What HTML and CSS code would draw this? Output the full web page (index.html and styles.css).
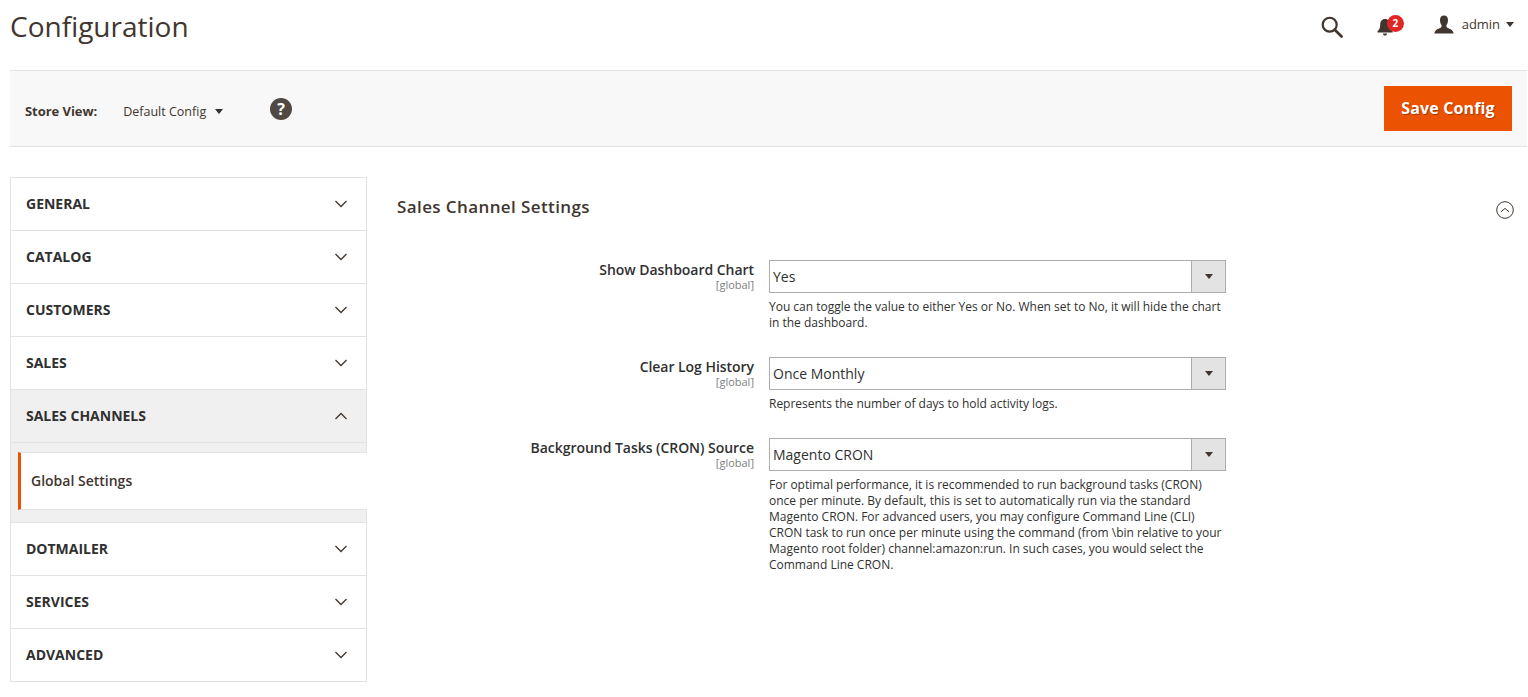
FILE: index.html
```html
<!DOCTYPE html>
<html lang="en">

<head>
    <meta charset="UTF-8">
    <title>Configuration</title>
    <link rel="stylesheet" href="styles.css">
</head>

<body>
    <!-- Page header -->
    <header class="page-header">
        <h1 class="page-title">Configuration</h1>
        <div class="header-actions">
            <svg class="icon-search" width="22" height="22" viewBox="0 0 24 24">
                <circle cx="9.5" cy="9.5" r="7.6" fill="none" stroke="#41362f" stroke-width="2.4" />
                <path d="M15 15L22.4 22.4" stroke="#41362f" stroke-width="3" stroke-linecap="round" />
            </svg>
            <div class="notifications">
                <svg width="18" height="20" viewBox="0 0 18 20">
                    <path d="M9 2C5.8 2 4.2 4.5 4.2 7.5C4.2 11 3.4 12.6 1.4 14.4V15.6H16.6V14.4C14.6 12.6 13.8 11 13.8 7.5C13.8 4.5 12.2 2 9 2Z" fill="#41362f" />
                    <path d="M7 16.6H11C11 18 10.2 18.6 9 18.6C7.8 18.6 7 18 7 16.6Z" fill="#41362f" />
                </svg>
                <span class="badge">2</span>
            </div>
            <div class="user">
                <svg class="user-icon" width="20" height="20" viewBox="0 0 20 20">
                    <path d="M10 0.5C7.2 0.5 6 2.6 6 5C6 7.2 6.6 9 7.6 10.2C7.8 11.6 7.2 12.4 5.6 13.2C3.6 14.1 1 14.6 0.4 18.6H19.6C19 14.6 16.4 14.1 14.4 13.2C12.8 12.4 12.2 11.6 12.4 10.2C13.4 9 14 7.2 14 5C14 2.6 12.8 0.5 10 0.5Z" fill="#41362f" />
                </svg>
                <span class="user-name">admin</span>
                <span class="caret caret-small"></span>
            </div>
        </div>
    </header>

    <!-- Store view bar -->
    <div class="action-bar">
        <div class="store-switcher">
            <span class="store-label">Store View:</span>
            <span class="store-value">Default Config</span>
            <span class="caret store-caret"></span>
            <span class="help-icon">?</span>
        </div>
        <button class="save-button">Save Config</button>
    </div>

    <div class="page-columns">
        <!-- Left nav -->
        <nav class="side-nav">
            <div class="nav-item">GENERAL<svg class="chevron" width="14" height="8" viewBox="0 0 14 8"><path d="M1.5 1L7 6.5L12.5 1" /></svg></div>
            <div class="nav-item">CATALOG<svg class="chevron" width="14" height="8" viewBox="0 0 14 8"><path d="M1.5 1L7 6.5L12.5 1" /></svg></div>
            <div class="nav-item">CUSTOMERS<svg class="chevron" width="14" height="8" viewBox="0 0 14 8"><path d="M1.5 1L7 6.5L12.5 1" /></svg></div>
            <div class="nav-item">SALES<svg class="chevron" width="14" height="8" viewBox="0 0 14 8"><path d="M1.5 1L7 6.5L12.5 1" /></svg></div>
            <div class="nav-item nav-item-open">SALES CHANNELS<svg class="chevron" width="14" height="8" viewBox="0 0 14 8"><path d="M1.5 7L7 1.5L12.5 7" /></svg></div>
            <div class="nav-sub">
                <a class="nav-sub-link">Global Settings</a>
            </div>
            <div class="nav-item">DOTMAILER<svg class="chevron" width="14" height="8" viewBox="0 0 14 8"><path d="M1.5 1L7 6.5L12.5 1" /></svg></div>
            <div class="nav-item">SERVICES<svg class="chevron" width="14" height="8" viewBox="0 0 14 8"><path d="M1.5 1L7 6.5L12.5 1" /></svg></div>
            <div class="nav-item">ADVANCED<svg class="chevron" width="14" height="8" viewBox="0 0 14 8"><path d="M1.5 1L7 6.5L12.5 1" /></svg></div>
        </nav>

        <!-- Settings -->
        <main class="settings">
            <div class="section-head">
                <h2 class="section-title">Sales Channel Settings</h2>
                <svg class="section-toggle" width="18" height="18" viewBox="0 0 18 18">
                    <circle cx="9" cy="9" r="8.3" fill="none" stroke="#41362f" stroke-width="1" />
                    <path d="M5 10.8L9 7.4L13 10.8" fill="none" stroke="#41362f" stroke-width="1" />
                </svg>
            </div>

            <div class="field">
                <div class="field-label">
                    <label>Show Dashboard Chart</label>
                    <span class="scope">[global]</span>
                </div>
                <div class="field-control">
                    <div class="select-box">
                        <span class="select-value">Yes</span>
                        <span class="select-arrow"><span class="caret caret-small"></span></span>
                    </div>
                    <p class="note">You can toggle the value to either Yes or No. When set to No, it will hide the chart in the dashboard.</p>
                </div>
            </div>

            <div class="field">
                <div class="field-label">
                    <label>Clear Log History</label>
                    <span class="scope">[global]</span>
                </div>
                <div class="field-control">
                    <div class="select-box">
                        <span class="select-value">Once Monthly</span>
                        <span class="select-arrow"><span class="caret caret-small"></span></span>
                    </div>
                    <p class="note">Represents the number of days to hold activity logs.</p>
                </div>
            </div>

            <div class="field">
                <div class="field-label">
                    <label>Background Tasks (CRON) Source</label>
                    <span class="scope">[global]</span>
                </div>
                <div class="field-control">
                    <div class="select-box">
                        <span class="select-value">Magento CRON</span>
                        <span class="select-arrow"><span class="caret caret-small"></span></span>
                    </div>
                    <p class="note">For optimal performance, it is recommended to run background tasks (CRON) once per minute. By default, this is set to automatically run via the standard Magento CRON. For advanced users, you may configure Command Line (CLI) CRON task to run once per minute using the command (from \bin relative to your Magento root folder) channel:amazon:run. In such cases, you would select the Command Line CRON.</p>
                </div>
            </div>
        </main>
    </div>
</body>

</html>
```

FILE: styles.css
```css
body {
    margin: 0;
    padding-left: 10px;
    height: 697px;
    overflow: hidden;
    background-color: #ffffff;
    color: #303030;
    font-family: 'Open Sans', sans-serif;
    font-size: 14px;
}

/* Page header */
.page-header {
    display: flex;
    justify-content: space-between;
    align-items: flex-start;
    height: 70px;
}

.page-title {
    margin: 7px 0 0;
    font-size: 28px;
    font-weight: 400;
    line-height: 38px;
    color: #41362f;
}

.header-actions {
    display: flex;
    align-items: center;
    height: 48px;
    padding-right: 14px;
}

.icon-search {
    margin-top: 6px;
}

.notifications {
    position: relative;
    display: flex;
    margin-left: 33px;
    margin-top: 6px;
}

.badge {
    position: absolute;
    top: -2px;
    left: 11px;
    width: 17px;
    height: 17px;
    border-radius: 50%;
    background-color: #e22626;
    color: #ffffff;
    font-size: 10px;
    font-weight: 700;
    line-height: 17px;
    text-align: center;
}

.user {
    display: flex;
    align-items: center;
    margin-left: 40px;
}

.user-icon {
    margin-top: 2px;
}

.user-name {
    margin-left: 8px;
    margin-right: 6px;
    font-size: 13px;
    letter-spacing: -0.05px;
    color: #41362f;
}

.caret {
    display: inline-block;
    width: 0;
    height: 0;
    border-left: 4.5px solid transparent;
    border-right: 4.5px solid transparent;
    border-top: 5px solid #303030;
}

.caret-small {
    border-top-color: #41362f;
}

/* Store view bar */
.action-bar {
    display: flex;
    justify-content: space-between;
    align-items: center;
    height: 75px;
    margin-right: 1px;
    padding: 0 15px;
    background-color: #f8f8f8;
    border-top: 1px solid #e3e3e3;
    border-bottom: 1px solid #e3e3e3;
}

.store-switcher {
    display: flex;
    align-items: center;
    margin-top: 4px;
    font-size: 13px;
}

.store-label {
    font-weight: 700;
    color: #41362f;
    letter-spacing: -0.05px;
}

.store-value {
    margin-left: 26px;
    margin-right: 9px;
    padding-top: 1px;
    font-size: 12.5px;
    color: #41362f;
}

.store-caret {
    margin-top: 2px;
}

.help-icon {
    display: block;
    width: 22px;
    height: 22px;
    margin-left: 47px;
    margin-top: -4px;
    border-radius: 50%;
    background-color: #514943;
    color: #ffffff;
    font-size: 16px;
    font-weight: 700;
    line-height: 22px;
    text-align: center;
}

.save-button {
    width: 128px;
    height: 45px;
    padding: 0 0 2px;
    background-color: #eb5202;
    color: #ffffff;
    border: none;
    font-family: inherit;
    font-size: 16px;
    font-weight: 700;
    letter-spacing: 0.15px;
    text-shadow: 1px 1px 1px rgba(0, 0, 0, 0.3);
}

/* Columns */
.page-columns {
    display: flex;
    margin-top: 30px;
}

.side-nav {
    width: 357px;
    height: 505px;
    flex-shrink: 0;
    box-sizing: border-box;
    border: 1px solid #e3e3e3;
    border-top: none;
}

.nav-item {
    display: flex;
    justify-content: space-between;
    align-items: center;
    box-sizing: border-box;
    height: 53px;
    padding: 0 18px 2px 15px;
    border-top: 1px solid #e3e3e3;
    font-size: 14px;
    font-weight: 700;
    color: #303030;
}

.chevron {
    margin-top: 2px;
}

.chevron path {
    fill: none;
    stroke: #41362f;
    stroke-width: 1.3;
}

.nav-item-open {
    background-color: #f0f0f0;
}

.nav-sub {
    padding: 9px 0 12px 7px;
    background-color: #f0f0f0;
    border-top: 1px solid #e3e3e3;
}

.nav-sub-link {
    display: flex;
    align-items: center;
    box-sizing: border-box;
    height: 58px;
    padding-left: 10px;
    padding-bottom: 1px;
    background-color: #ffffff;
    border-left: 3px solid #eb5202;
    border-top: 1px solid #e3e3e3;
    border-bottom: 1px solid #e3e3e3;
    font-size: 14px;
    font-weight: 600;
    color: #41362f;
    margin-right: -1px;
}

/* Settings */
.settings {
    flex: 1;
    padding: 0 14px 0 30px;
}

.section-head {
    display: flex;
    justify-content: space-between;
    align-items: center;
    height: 26px;
    margin-top: 18px;
    margin-bottom: 39px;
}

.section-title {
    margin: -4px 0 0;
    font-size: 17px;
    font-weight: 600;
    letter-spacing: 0.4px;
    color: #41362f;
}

.section-toggle {
    margin-top: 4px;
}

.field {
    display: flex;
    margin-bottom: 26px;
}

.field-label {
    display: flex;
    flex-direction: column;
    align-items: flex-end;
    width: 357px;
    margin-right: 15px;
}

.field-label label {
    font-size: 14px;
    font-weight: 600;
    line-height: 19px;
    letter-spacing: -0.04px;
    color: #303030;
}

.scope {
    font-size: 11px;
    line-height: 12px;
    color: #808080;
}

.field-control {
    width: 457px;
}

.select-box {
    display: flex;
    box-sizing: border-box;
    height: 33px;
    border: 1px solid #adadad;
    background-color: #ffffff;
}

.select-value {
    flex: 1;
    padding-left: 3px;
    font-size: 14px;
    line-height: 31px;
    color: #303030;
}

.select-arrow {
    display: flex;
    justify-content: center;
    align-items: center;
    width: 33px;
    background-color: #e3e3e3;
    border-left: 1px solid #adadad;
}

.note {
    margin: 6px 0 0;
    font-size: 12px;
    line-height: 16px;
    letter-spacing: -0.01px;
    color: #303030;
}
```
